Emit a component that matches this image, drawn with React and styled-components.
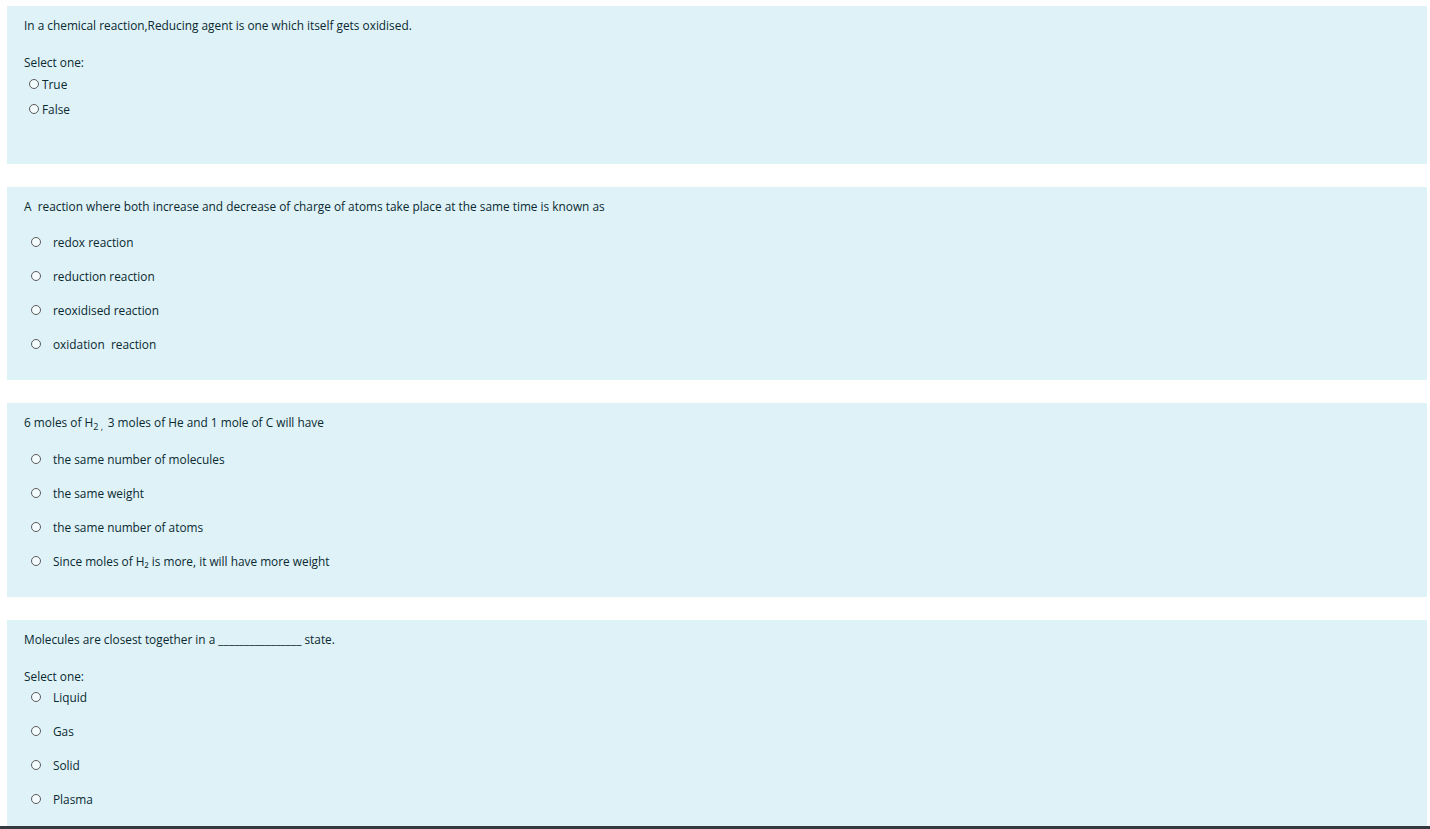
import React from "react";
import styled, { createGlobalStyle } from "styled-components";

const GlobalStyle = createGlobalStyle`
    body {
        margin: 0;
        background: #ffffff;
        font-family: "Open Sans", "Noto Sans", sans-serif;
        color: #0b2a30;
    }
`;

const Page = styled.div`
    padding: 6px 3px 0 7px;
    display: flex;
    flex-direction: column;
    gap: 23px;
`;

const Card = styled.div`
    background: #def2f8;
    padding: 9px 17px 0;
    min-height: ${(p) => p.$height}px;
    box-sizing: border-box;
    font-size: 11.85px;
    line-height: 20px;
`;

const Question = styled.div`
    height: 20px;
    white-space: pre;
    sub {
        font-size: 9px;
        line-height: 0;
        vertical-align: -3px;
    }
`;

const Prompt = styled.div`
    margin-top: 17px;
    height: 20px;
`;

const Options = styled.div`
    display: flex;
    flex-direction: column;
    margin-top: ${(p) => p.$top}px;
    gap: ${(p) => p.$gap}px;
    padding-left: ${(p) => p.$indent}px;
`;

const Option = styled.label`
    display: flex;
    align-items: center;
    height: 20px;
    gap: ${(p) => p.$gap}px;
    white-space: pre;
`;

const Radio = styled.span`
    width: 10px;
    height: 10px;
    border: 1px solid #5a5a5a;
    border-radius: 50%;
    box-sizing: border-box;
    flex: none;
    background: #f4fbfd;
`;

const Footer = styled.div`
    height: 40px;
    background: #343a40;
`;

const Choices = ({ items, top, gap, indent, labelGap }) => (
    <Options $top={top} $gap={gap} $indent={indent}>
        {items.map((t) => (
            <Option key={t} $gap={labelGap}>
                <Radio />
                <span>{t}</span>
            </Option>
        ))}
    </Options>
);

const App = () => {
    return (
        <>
            <GlobalStyle />
            <Page>
                <Card $height={158}>
                    <Question>In a chemical reaction,Reducing agent is one which itself gets oxidised.</Question>
                    <Prompt>Select one:</Prompt>
                    <Choices items={["True", "False"]} top={2} gap={5} indent={5} labelGap={3} />
                </Card>

                <Card $height={193}>
                    <Question>A  reaction where both increase and decrease of charge of atoms take place at the same time is known as</Question>
                    <Choices
                        items={["redox reaction", "reduction reaction", "reoxidised reaction", "oxidation  reaction"]}
                        top={16}
                        gap={14}
                        indent={7}
                        labelGap={12}
                    />
                </Card>

                <Card $height={194}>
                    <Question>
                        6 moles of H<sub>2</sub><sub> ,  </sub>3 moles of He and 1 mole of C will have
                    </Question>
                    <Choices
                        items={[
                            "the same number of molecules",
                            "the same weight",
                            "the same number of atoms",
                            "Since moles of H\u2082 is more, it will have more weight",
                        ]}
                        top={17}
                        gap={14}
                        indent={7}
                        labelGap={12}
                    />
                </Card>

                <Card $height={206}>
                    <Question>Molecules are closest together in a ________________ state.</Question>
                    <Prompt>Select one:</Prompt>
                    <Choices items={["Liquid", "Gas", "Solid", "Plasma"]} top={1} gap={14} indent={7} labelGap={12} />
                </Card>
            </Page>
            <Footer />
        </>
    );
};

export default App;
